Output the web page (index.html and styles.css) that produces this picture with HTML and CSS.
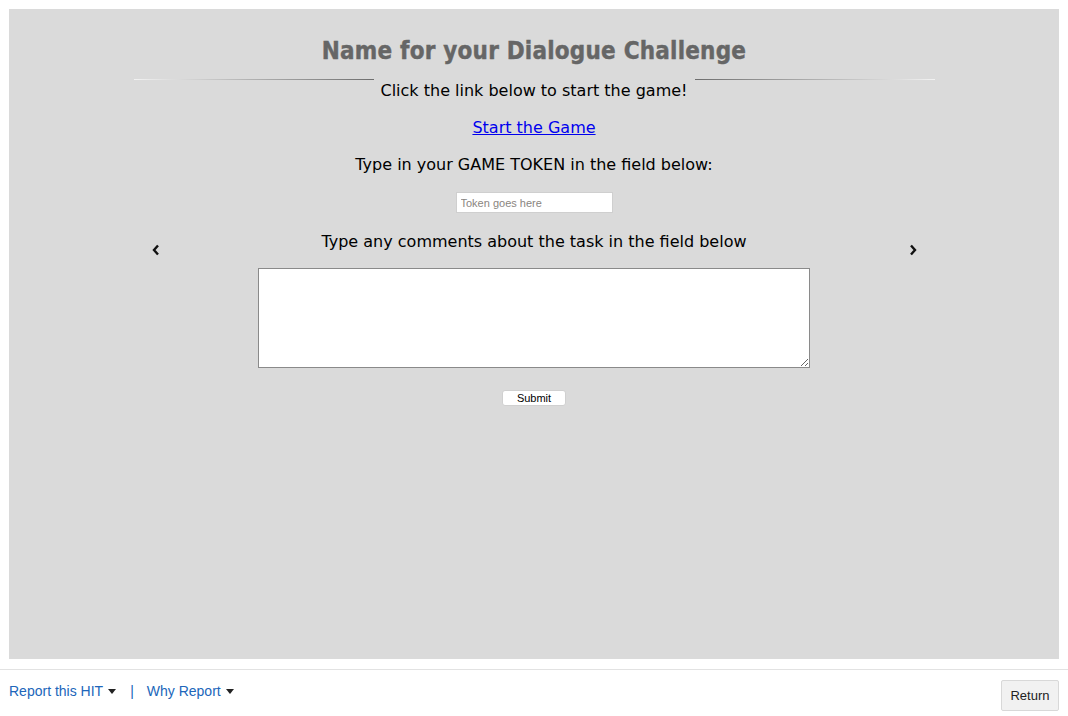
FILE: index.html
```html
<!DOCTYPE html>
<html>
<head>
<meta charset="utf-8">
<link rel="stylesheet" href="styles.css">
</head>
<body>
<div class="panel">
  <div class="content">
    <h1 class="title">Name for your Dialogue Challenge</h1>
    <div class="rule"><span class="rule-seg left"></span><span class="rule-gap"></span><span class="rule-seg right"></span></div>
    <p class="line first">Click the link below to start the game!</p>
    <p class="line gap"><a class="game-link" href="#">Start the Game</a></p>
    <p class="line gap">Type in your GAME TOKEN in the field below:</p>
    <div class="token-wrap"><input class="token" type="text" placeholder="Token goes here"></div>
    <div class="comments-row">
      <span class="chev"><svg width="8" height="12" viewBox="0 0 8 12"><polyline points="6,1.5 2,6 6,10.5" fill="none" stroke="#111" stroke-width="2.4" stroke-linejoin="miter"/></svg></span>
      <p class="line comments">Type any comments about the task in the field below</p>
      <span class="chev"><svg width="8" height="12" viewBox="0 0 8 12"><polyline points="2,1.5 6,6 2,10.5" fill="none" stroke="#111" stroke-width="2.4" stroke-linejoin="miter"/></svg></span>
    </div>
    <div class="ta-wrap"><textarea class="comments-box"></textarea></div>
    <div class="submit-wrap"><button class="submit" type="button">Submit</button></div>
  </div>
</div>
<div class="footer">
  <div class="footer-links">
    <a class="flink" href="#">Report this HIT <span class="caret"></span></a>
    <span class="sep">|</span>
    <a class="flink" href="#">Why Report <span class="caret"></span></a>
  </div>
  <button class="return" type="button">Return</button>
</div>
</body>
</html>
```
FILE: styles.css
```css
html, body {
  margin: 0;
  padding: 0;
  background: #fff;
}
body {
  font-family: "DejaVu Sans", Verdana, sans-serif;
}
.panel {
  margin: 9px 9px 0 9px;
  height: 650px;
  background: #dadada;
  overflow: hidden;
}
.content {
  width: 801px;
  margin: 0 auto;
  text-align: center;
}
.title {
  margin: 27px 0 0 0;
  font-family: "DejaVu Sans Condensed", "DejaVu Sans", sans-serif;
  font-stretch: condensed;
  font-weight: bold;
  font-size: 24px;
  line-height: 30px;
  color: #666;
  letter-spacing: 0.2px;
  -webkit-text-stroke: 0.4px #666;
}
.rule {
  margin-top: 13px;
  height: 1px;
  display: flex;
}
.rule-seg {
  width: 240px;
  height: 1px;
}
.rule-seg.left {
  background: linear-gradient(to right, #f2f2f2, #6e6e6e);
}
.rule-seg.right {
  background: linear-gradient(to right, #6e6e6e, #f2f2f2);
}
.rule-gap {
  flex: 1;
}
.line {
  margin: 0;
  font-size: 16px;
  line-height: 20px;
  color: #000;
}
.line.first {
  margin-top: 1px;
}
.line.gap {
  margin-top: 17px;
}
.game-link {
  color: #0000ee;
  text-decoration: underline;
}
.token-wrap {
  margin-top: 17px;
  height: 21px;
}
.token {
  box-sizing: border-box;
  width: 157px;
  height: 21px;
  margin: 0;
  padding: 1px 4px;
  border: 1px solid #cfcfcf;
  background: #fff;
  font-family: "Liberation Sans", Arial, sans-serif;
  font-size: 11px;
  vertical-align: top;
}
.token::placeholder {
  color: #8a8580;
}
.comments-row {
  margin-top: 19px;
  height: 20px;
  display: flex;
  align-items: flex-start;
  padding: 0 18px 0 18px;
}
.comments {
  flex: 1;
}
.chev {
  width: 8px;
  height: 12px;
  margin-top: 12px;
  display: block;
}
.chev svg {
  display: block;
}
.ta-wrap {
  margin-top: 16px;
  height: 100px;
}
.comments-box {
  box-sizing: border-box;
  width: 552px;
  height: 100px;
  margin: 0;
  border: 1px solid #8a8a8a;
  background: #fff;
  vertical-align: top;
  display: inline-block;
}
.submit-wrap {
  margin-top: 22px;
}
.submit {
  box-sizing: border-box;
  width: 64px;
  height: 16px;
  padding: 0;
  border: 1px solid #d0d0d0;
  border-radius: 3px;
  background: #fff;
  font-family: "Liberation Sans", Arial, sans-serif;
  font-size: 11px;
  line-height: 14px;
  color: #000;
  vertical-align: top;
}
.footer {
  margin-top: 10px;
  border-top: 1px solid #e2e2e2;
  display: flex;
  justify-content: space-between;
  align-items: flex-start;
  padding: 10px 9px 0 9px;
  font-family: "Liberation Sans", Arial, sans-serif;
}
.footer-links {
  display: flex;
  align-items: center;
  font-size: 14px;
  line-height: 16px;
  padding-top: 3px;
}
.flink {
  color: #2066ba;
  text-decoration: none;
  display: flex;
  align-items: center;
}
.caret {
  display: inline-block;
  width: 0;
  height: 0;
  margin-left: 5px;
  border-left: 4px solid transparent;
  border-right: 4px solid transparent;
  border-top: 5px solid #222;
}
.sep {
  color: #2066ba;
  margin: 0 13px 0 14px;
}
.return {
  box-sizing: border-box;
  width: 58px;
  height: 31px;
  margin: 0;
  padding: 0;
  border: 1px solid #d8d8d8;
  border-radius: 2px;
  background: #f1f1f1;
  font-family: "Liberation Sans", Arial, sans-serif;
  font-size: 13px;
  color: #222;
}
```
